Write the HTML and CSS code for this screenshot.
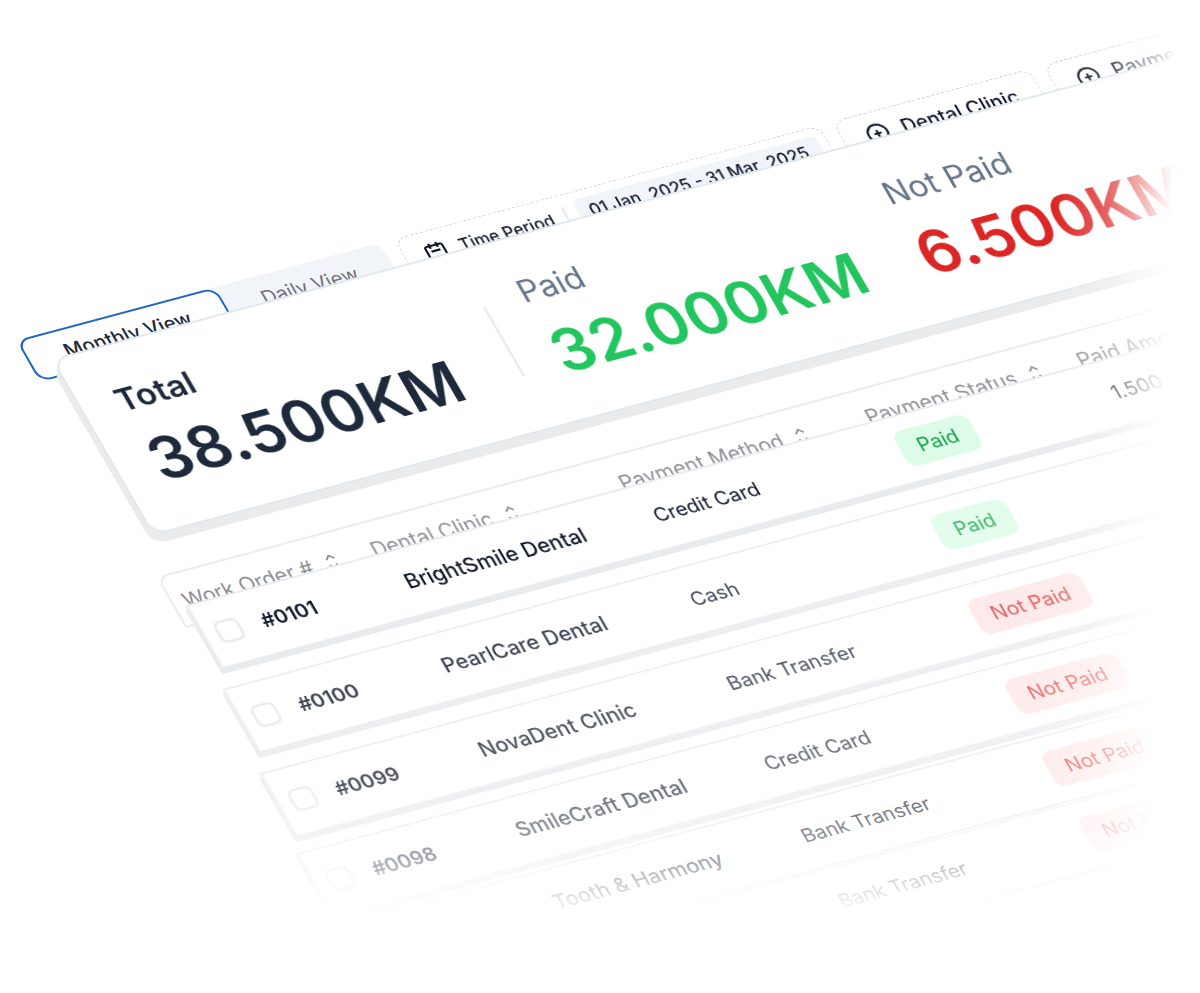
FILE: index.html
```html
<!DOCTYPE html>
<html lang="en">
<head>
<meta charset="utf-8">
<title>Payments overview</title>
<link rel="stylesheet" href="styles.css">
</head>
<body>
<svg class="sprite" aria-hidden="true">
  <symbol id="plus" viewBox="0 0 24 24"><circle cx="12" cy="12" r="10.5"/><path d="M12 8v8M8 12h8"/></symbol>
  <symbol id="calendar" viewBox="0 0 24 24"><rect x="2.5" y="4" width="19" height="18" rx="2"/><path d="M8 1v6M16 1v6M7 10.5h10"/></symbol>
  <symbol id="sort" viewBox="0 0 12 20"><path d="M1.500 6.500 6 2l4.500 4.500M1.500 13.500 6 18l4.500-4.500"/></symbol>
</svg>
<main class="stage">
  <div class="scene">
    <div class="toolbar">
      <div class="tabs" role="tablist">
        <button class="tab tab-active" role="tab" aria-selected="true">Monthly View</button>
        <button class="tab" role="tab" aria-selected="false">Daily View</button>
      </div>
      <button class="filter filter-period">
        <svg class="icon"><use href="#calendar"/></svg>
        <span>Time Period</span>
        <span class="filter-value">01 Jan, 2025 - 31 Mar, 2025</span>
      </button>
      <button class="filter"><svg class="icon"><use href="#plus"/></svg><span>Dental Clinic</span></button>
      <button class="filter"><svg class="icon"><use href="#plus"/></svg><span>Payment</span></button>
    </div>

    <section class="summary">
      <div class="stat stat-total"><h2 class="stat-label">Total</h2><p class="stat-value">38.500KM</p></div>
      <div class="stat stat-paid"><h2 class="stat-label">Paid</h2><p class="stat-value">32.000KM</p></div>
      <div class="stat stat-unpaid"><h2 class="stat-label">Not Paid</h2><p class="stat-value">6.500KM</p></div>
    </section>

    <table class="orders">
      <thead>
        <tr>
          <th><button class="sort">Work Order # <svg class="sort-icon"><use href="#sort"/></svg></button></th>
          <th><button class="sort">Dental Clinic <svg class="sort-icon"><use href="#sort"/></svg></button></th>
          <th><button class="sort">Payment Method <svg class="sort-icon"><use href="#sort"/></svg></button></th>
          <th><button class="sort">Payment Status <svg class="sort-icon"><use href="#sort"/></svg></button></th>
          <th><button class="sort">Paid Amount</button></th>
        </tr>
      </thead>
      <tbody>
        <tr class="level-5">
          <td><label class="pick"><input type="checkbox">#0101</label></td>
          <td class="clinic">BrightSmile Dental</td><td>Credit Card</td>
          <td><span class="badge badge-paid">Paid</span></td><td>1.500</td>
        </tr>
        <tr class="level-4">
          <td><label class="pick"><input type="checkbox">#0100</label></td>
          <td class="clinic">PearlCare Dental</td><td>Cash</td>
          <td><span class="badge badge-paid">Paid</span></td><td></td>
        </tr>
        <tr class="level-3">
          <td><label class="pick"><input type="checkbox">#0099</label></td>
          <td class="clinic">NovaDent Clinic</td><td>Bank Transfer</td>
          <td><span class="badge badge-unpaid">Not Paid</span></td><td></td>
        </tr>
        <tr class="level-2">
          <td><label class="pick"><input type="checkbox">#0098</label></td>
          <td class="clinic">SmileCraft Dental</td><td>Credit Card</td>
          <td><span class="badge badge-unpaid">Not Paid</span></td><td></td>
        </tr>
        <tr class="level-1">
          <td></td>
          <td class="clinic">Tooth &amp; Harmony</td><td>Bank Transfer</td>
          <td><span class="badge badge-unpaid">Not Paid</span></td><td></td>
        </tr>
        <tr class="level-0">
          <td></td><td></td><td>Bank Transfer</td>
          <td><span class="badge badge-unpaid">Not Paid</span></td><td></td>
        </tr>
        <tr class="level-0"><td></td><td></td><td></td><td></td><td></td></tr>
      </tbody>
    </table>
  </div>
</main>
</body>
</html>
```
FILE: styles.css
```css
* {
  box-sizing: border-box;
}

body {
  margin: 0;
  background: #fff;
  color: #0f172a;
  font-family: Inter, "Liberation Sans", sans-serif;
  font-size: 20px;
  line-height: 28px;
}

button {
  border: 0;
  background: none;
  color: inherit;
  font: inherit;
  white-space: nowrap;
}

.sprite {
  display: none;
}

/* Fades the scene out towards the right and bottom edges */
.stage {
  height: 100vh;
  overflow: hidden;
  padding: 374px 0 0 14px;
  mask-image:
    linear-gradient(92deg, #000 86%, rgb(0 0 0 / 75%) 90%, rgb(0 0 0 / 35%) 93%, transparent 95.5%),
    linear-gradient(to bottom, #000 79%, rgb(0 0 0 / 60%) 86.5%, rgb(0 0 0 / 30%) 89%, transparent 92.5%);
  mask-composite: intersect;
}

/* Isometric plane: x runs up at 15deg, y runs down at 60deg */
.scene {
  width: 108%;
  transform: matrix(0.966, -0.259, 0.5, 0.866, 0, 0);
  transform-origin: 0 0;
}

/* Layers rise straight up the screen by --lift */
.toolbar,
.summary,
.orders tr {
  transform: translate(calc(var(--lift) * 0.52), calc(var(--lift) * -1));
}

.toolbar {
  --lift: 33px;
  display: flex;
  gap: 14px;
  height: 48px;
  padding-left: 2px;
  font-weight: 500;
}

.tabs {
  display: flex;
  flex: none;
  border-radius: 12px;
  background: #f1f5f9;
}

.tab {
  padding: 0 36px;
  border-radius: 12px;
  color: #71717a;
  font-weight: 400;
}

.tab-active {
  border: 2px solid #1e66c4;
  background: #fff;
  color: #1e293b;
  font-weight: 500;
}

.filter {
  display: flex;
  flex: none;
  align-items: center;
  gap: 14px;
  padding: 0 23px;
  border: 1px dashed #d4d4d8;
  border-radius: 12px;
}

.filter-period {
  gap: 13px;
  padding: 0 8px 0 20px;
  font-size: 17px;
}

.filter-value {
  position: relative;
  margin-left: 12px;
  padding: 1px 14px 1px 12px;
  border-radius: 6px;
  background: #f1f5f9;
}

.filter-value::before {
  content: "";
  position: absolute;
  top: 4px;
  left: -13px;
  width: 2px;
  height: 22px;
  background: #e2e8f0;
}

.icon {
  width: 22px;
  height: 22px;
  fill: none;
  stroke: currentColor;
  stroke-width: 2.4;
}

.summary {
  --lift: 79px;
  display: flex;
  margin-top: 26px;
  padding: 36px 34px 32px 35px;
  border: 2px solid #e2e8f0;
  border-radius: 16px;
  background: #fff;
  box-shadow: -2px 3px 0 #ebebeb, -3px 6px 0 #ebebeb, -5px 9px 0 #ebebeb;
}

.stat {
  margin-right: 59px;
}

.stat-total {
  position: relative;
  margin-right: 98px;
  color: #1e293b;
}

.stat-total::after {
  content: "";
  position: absolute;
  top: 26px;
  right: -60px;
  width: 2px;
  height: 80px;
  background: #e2e8f0;
}

.stat-label {
  margin: 0;
  color: #64748b;
  font-size: 32px;
  font-weight: 400;
  line-height: 44px;
}

.stat-total .stat-label {
  color: inherit;
  font-size: 33px;
  font-weight: 600;
}

.stat-value {
  margin: 8px 0 0;
  font-size: 62px;
  font-weight: 600;
  line-height: 80px;
}

.stat-paid .stat-value {
  color: #22c55e;
}

.stat-unpaid .stat-value {
  color: #dc2626;
}

.orders {
  display: block;
  margin-top: 6px;
}

.orders thead,
.orders tbody {
  display: block;
}

.orders tr {
  display: grid;
  grid-template-columns: 195px 257px 255px 219px 1fr;
  align-items: center;
  height: 74px;
  padding-left: 12px;
  border: 2px solid #ebecef;
  background: #fff;
  opacity: var(--ink, 1);
}

.orders thead tr {
  --lift: 43px;
  height: 59px;
  padding-left: 10px;
  border-radius: 12px 12px 0 0;
  color: #8f8f96;
  font-size: 21px;
}

.orders th,
.orders td {
  padding: 0;
  text-align: left;
  font-weight: 400;
}

.sort {
  display: flex;
  align-items: center;
  gap: 14px;
  padding: 4px 0 0;
}

.sort-icon {
  width: 11px;
  height: 18px;
  fill: none;
  stroke: currentColor;
  stroke-width: 2;
}

.orders .clinic {
  font-size: 21px;
  font-weight: 500;
}

.pick {
  display: flex;
  align-items: center;
  gap: 22px;
  font-weight: 600;
}

.pick input {
  appearance: none;
  width: 24px;
  height: 24px;
  margin: 0;
  border: 2px solid #e5e7eb;
  border-radius: 7px;
  background: #fff;
  box-shadow: 0 1px 2px rgb(0 0 0 / 5%);
}

.badge {
  display: inline-block;
  padding: 6px 18px;
  border-radius: 10px;
}

.badge-paid {
  background: #dcfce7;
  color: #16a34a;
}

.badge-unpaid {
  background: #fee2e2;
  color: #dc2626;
}

.orders .level-5,
.orders .level-4,
.orders .level-3,
.orders .level-2 {
  box-shadow: -1px 2px 0 #e9eaec, -3px 5px 0 #e9eaec;
}

.orders .level-5 {
  --lift: 66px;
}

.orders .level-4 {
  --lift: 46px;
  --ink: 0.8;
}

.orders .level-3 {
  --lift: 26px;
  --ink: 0.73;
}

.orders .level-2 {
  --lift: 10px;
  --ink: 0.65;
}

.orders .level-1 {
  --lift: 2px;
  --ink: 0.45;
}

.orders .level-0 {
  --lift: 1px;
  --ink: 0.4;
}
```
